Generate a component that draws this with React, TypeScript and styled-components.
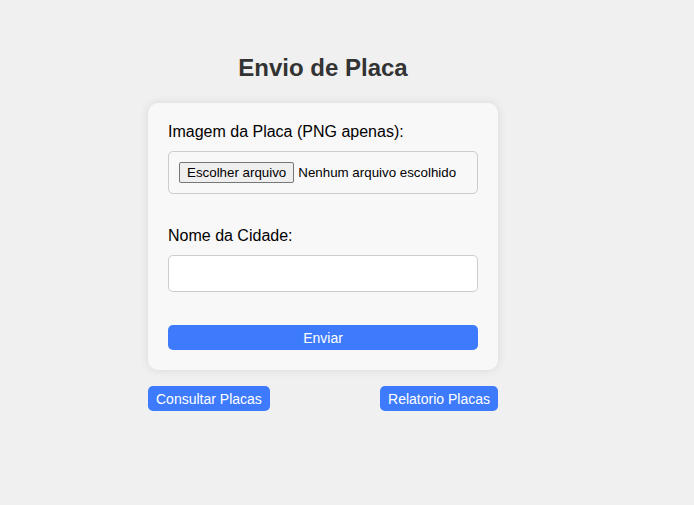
import React from "react";
import styled, { createGlobalStyle } from "styled-components";

const Global = createGlobalStyle`
  html, body { margin: 0; padding: 0; }
  body {
    background: #f0f0f0;
    font-family: "Liberation Sans", Arial, sans-serif;
    color: #000;
  }
`;

const Page = styled.div`
  display: flex;
  justify-content: center;
  padding: 54px 48px 0 0;
`;

const Column = styled.div`
  width: 350px;
  display: flex;
  flex-direction: column;
`;

const Title = styled.h2`
  margin: 0 0 21px;
  font-size: 24px;
  line-height: 28px;
  font-weight: bold;
  text-align: center;
  color: #333;
`;

const Card = styled.form`
  background: #f8f8f8;
  border-radius: 10px;
  box-shadow: 0 0 10px rgba(0, 0, 0, 0.1);
  padding: 20px;
  display: flex;
  flex-direction: column;
`;

const Label = styled.label<{ $top?: number }>`
  font-size: 16px;
  line-height: 18px;
  margin-top: ${(p) => p.$top ?? 0}px;
  margin-bottom: 10px;
`;

const FileBox = styled.div`
  border: 1px solid #ccc;
  border-radius: 5px;
  padding: 10px;
  display: flex;
  align-items: center;
  gap: 4px;
  font-size: 13.33px;
  background: #f8f8f8;
`;

const FileButton = styled.span`
  display: inline-flex;
  align-items: center;
  height: 21px;
  box-sizing: border-box;
  padding: 0 7px;
  border: 1px solid #767676;
  border-radius: 2px;
  background: #efefef;
  font-size: 13.33px;
`;

const TextInput = styled.input`
  box-sizing: border-box;
  width: 100%;
  height: 37px;
  padding: 10px;
  border: 1px solid #ccc;
  border-radius: 5px;
  background: #fff;
  font-size: 16px;
  font-family: inherit;
`;

const Submit = styled.button`
  margin-top: 33px;
  height: 25px;
  border: none;
  border-radius: 5px;
  background: #3e7bfc;
  color: #fff;
  font-family: inherit;
  font-size: 14px;
  font-weight: normal;
  cursor: pointer;
`;

const Actions = styled.div`
  margin-top: 16px;
  display: flex;
  justify-content: space-between;
`;

const LinkButton = styled.button`
  height: 25px;
  padding: 0 8px;
  border: none;
  border-radius: 5px;
  background: #3e7bfc;
  color: #fff;
  font-family: inherit;
  font-size: 14px;
  font-weight: normal;
  cursor: pointer;
`;

export default function App() {
  return (
    <>
      <Global />
      <Page>
        <Column>
          <Title>Envio de Placa</Title>
          <Card onSubmit={(e) => e.preventDefault()}>
            <Label>Imagem da Placa (PNG apenas):</Label>
            <FileBox>
              <FileButton>Escolher arquivo</FileButton>
              <span>Nenhum arquivo escolhido</span>
            </FileBox>
            <Label $top={33}>Nome da Cidade:</Label>
            <TextInput type="text" />
            <Submit type="submit">Enviar</Submit>
          </Card>
          <Actions>
            <LinkButton>Consultar Placas</LinkButton>
            <LinkButton>Relatorio Placas</LinkButton>
          </Actions>
        </Column>
      </Page>
    </>
  );
}
